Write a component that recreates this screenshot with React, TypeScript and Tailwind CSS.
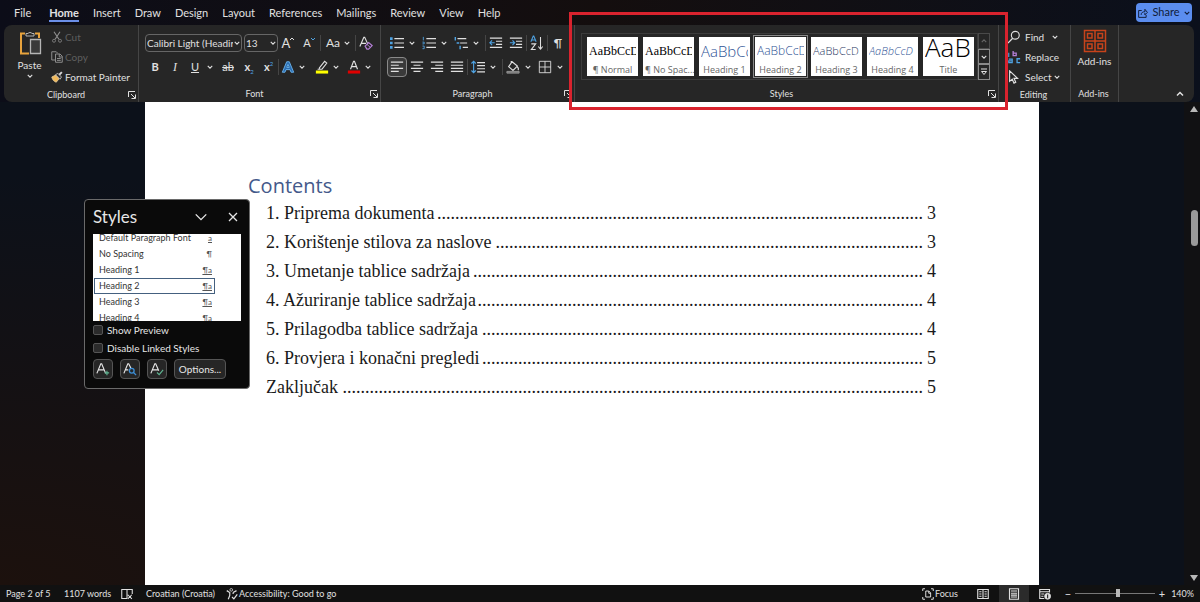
import { useState } from 'react';
import type { ReactNode } from 'react';
import { clsx } from 'clsx';

const TABS = ['File', 'Home', 'Insert', 'Draw', 'Design', 'Layout', 'References', 'Mailings', 'Review', 'View', 'Help'];

const GALLERY = [
    { name: '¶ Normal', sample: 'AaBbCcD', look: "items-center text-[12px] text-black font-['Liberation_Serif',serif]" },
    { name: '¶ No Spac...', sample: 'AaBbCcD', look: "items-center text-[12px] text-black font-['Liberation_Serif',serif]" },
    { name: 'Heading 1', sample: 'AaBbCc', look: 'items-center text-[15px] font-light text-[#2f5496]' },
    { name: 'Heading 2', sample: 'AaBbCcD', look: 'items-center text-[12px] font-light text-[#2f5496]' },
    { name: 'Heading 3', sample: 'AaBbCcD', look: 'items-center text-[11px] font-light text-[#1f3763]' },
    { name: 'Heading 4', sample: 'AaBbCcD', look: 'items-center text-[11px] font-light italic text-[#2f5496]' },
    { name: 'Title', sample: 'AaB', look: 'items-start text-[26px] leading-4 font-light text-black' },
];

const STYLE_LIST = [
    { name: 'Default Paragraph Font', mark: 'a' },
    { name: 'No Spacing', mark: '¶' },
    { name: 'Heading 1', mark: '¶a' },
    { name: 'Heading 2', mark: '¶a' },
    { name: 'Heading 3', mark: '¶a' },
    { name: 'Heading 4', mark: '¶a' },
];

const TOC = [
    { title: '1. Priprema dokumenta', dots: 108, page: 3 },
    { title: '2. Korištenje stilova za naslove', dots: 95, page: 3 },
    { title: '3. Umetanje tablice sadržaja', dots: 100, page: 4 },
    { title: '4. Ažuriranje tablice sadržaja', dots: 99, page: 4 },
    { title: '5. Prilagodba tablice sadržaja', dots: 98, page: 4 },
    { title: '6. Provjera i konačni pregledi', dots: 98, page: 5 },
    { title: 'Zaključak', dots: 129, page: 5 },
];

function Chevron({ className = 'w-1.5 h-1.5', thin }: { className?: string; thin?: boolean }) {
    return (
        <svg viewBox="0 0 8 8" className={className} fill="none" stroke="currentColor" strokeWidth={thin ? 0.8 : 1.5}>
            <path d="M1 2.500 4 5.500 7 2.500" />
        </svg>
    );
}

function Icon({ children, className = 'w-4 h-4' }: { children: ReactNode; className?: string }) {
    return (
        <svg viewBox="0 0 16 16" className={clsx('shrink-0', className)} fill="none" stroke="currentColor">
            {children}
        </svg>
    );
}

function Tool({ label, children, className = 'w-5', active }: { label: string; children: ReactNode; className?: string; active?: boolean }) {
    return (
        <button
            type="button"
            aria-label={label}
            className={clsx(
                'h-5 shrink-0 flex items-center justify-center rounded-sm',
                className,
                active && 'border border-[#8a8a8a] bg-[#3a3a3a]'
            )}
        >
            {children}
        </button>
    );
}

function More({ label, className = 'mr-0.5' }: { label: string; className?: string }) {
    return (
        <button type="button" aria-label={label} className={clsx('w-2.5 h-5 shrink-0 flex items-center justify-center', className)}>
            <Chevron />
        </button>
    );
}

function Sep() {
    return <span className="w-px h-4 shrink-0 bg-[#454545]" />;
}

function Launcher({ label }: { label: string }) {
    return (
        <button type="button" aria-label={label} className="w-2 h-2 shrink-0">
            <svg viewBox="0 0 8 8" className="w-2 h-2" fill="none" stroke="currentColor">
                <path d="M.5 6V.5H7M3 3l4 4M7.500 3.500v4h-4" />
            </svg>
        </button>
    );
}

function Group({ name, className, launcher = true, children }: { name: string; className: string; launcher?: boolean; children: ReactNode }) {
    return (
        <section aria-label={name} className={clsx('relative shrink-0 flex flex-col border-r border-[#454545]', className)}>
            <div className="h-[62px] pt-2">{children}</div>
            <div className="flex items-center pr-0.5">
                <span className="flex-1 text-center text-[9px] leading-4">{name}</span>
                {launcher && <Launcher label={`${name} settings`} />}
            </div>
        </section>
    );
}

function Clipboard() {
    return (
        <Group name="Clipboard" className="w-[135px]">
            <div className="flex -mt-1">
                <button type="button" className="w-[47px] pl-1 flex flex-col items-center text-[10px] leading-4">
                    <svg viewBox="0 0 24 28" className="w-6 h-7" fill="none">
                        <path d="M7 4.500H3v20h8M17 4.500h4V9" stroke="#e8a33d" strokeWidth="2" />
                        <path d="M8 7V4.500h2a2.500 2.500 0 0 1 4 0h2V7z" fill="#262626" stroke="#b5b5b5" />
                        <path d="M12.500 10.500h10v14h-10z" fill="#3a3a3a" stroke="#b5b5b5" strokeWidth="1.300" />
                    </svg>
                    Paste
                    <Chevron />
                </button>
                <div className="flex flex-col text-[10px] leading-5 -mt-0.5">
                    <button type="button" className="h-5 flex items-center gap-0.5 text-[#5f5f5f]">
                        <Icon className="w-3 h-3 text-[#8f8f8f]">
                            <path d="M4 1l6.500 10M12 1 5.500 11" strokeWidth="1.500" />
                            <circle cx="4" cy="13" r="2" />
                            <circle cx="12" cy="13" r="2" />
                        </Icon>
                        Cut
                    </button>
                    <button type="button" className="h-5 flex items-center gap-0.5 text-[#5f5f5f]">
                        <Icon className="w-3 h-3 text-[#8f8f8f]">
                            <path d="M6 12H1V1h6l2 2" strokeWidth="1.300" />
                            <path d="M6 4h6l3 3v8H6zM11 4v4h4M8 10h5M8 12.500h5" strokeWidth="1.300" />
                        </Icon>
                        Copy
                    </button>
                    <button type="button" className="h-5 flex items-center gap-0.5 whitespace-nowrap">
                        <Icon className="w-3 h-3">
                            <path d="M1 8l6-3 4 5-4 5C4 14 2 12 1 8z" fill="#f0b95b" stroke="#e8d0a0" />
                            <path d="M6 5l6 6 2-3-5-5z" fill="#333" stroke="#d6d6d6" />
                            <path d="M11 5l3.500-3.500" stroke="#d6d6d6" strokeWidth="2.500" />
                        </Icon>
                        Format Painter
                    </button>
                </div>
            </div>
        </Group>
    );
}

function Combo({ label, value, options, className }: { label: string; value: string; options: string[]; className: string }) {
    return (
        <div className={clsx('relative shrink-0', className)}>
            <select
                aria-label={label}
                defaultValue={value}
                className="block w-full h-[18px] pl-px pr-2 appearance-none rounded-sm border border-[#666] bg-[#262626] text-[10px] leading-4 outline-none"
            >
                {options.map((o) => (
                    <option key={o}>{o}</option>
                ))}
            </select>
            <span className="absolute right-0.5 inset-y-0 flex items-center pointer-events-none">
                <Chevron />
            </span>
        </div>
    );
}

function FontGroup() {
    return (
        <Group name="Font" className="w-[242px]">
            <div className="pl-1.5 flex flex-col gap-1">
                <div className="h-5 flex items-center">
                    <Combo label="Font" value="Calibri Light (Headir" options={['Calibri Light (Headir', 'Calibri']} className="w-[97px] mr-0.5" />
                    <Combo label="Font size" value="13" options={['11', '12', '13']} className="w-[34px]" />
                    <Tool label="Grow font">
                        <span className="text-[13px] leading-4">A</span>
                        <svg viewBox="0 0 4 4" className="w-1 h-1 mb-2" fill="none" stroke="currentColor"><path d="M0 3 2 1l2 2" /></svg>
                    </Tool>
                    <Tool label="Shrink font" className="w-[22px]">
                        <span className="text-[11px] leading-4">A</span>
                        <svg viewBox="0 0 4 4" className="w-1 h-1 mb-2" fill="none" stroke="#4fa3e3"><path d="M0 1l2 2 2-2" /></svg>
                    </Tool>
                    <Sep />
                    <Tool label="Change case" className="w-[34px] gap-1">
                        <span className="text-[12px] leading-4">Aa</span>
                        <Chevron />
                    </Tool>
                    <Sep />
                    <Tool label="Clear formatting">
                        <Icon className="w-3.5 h-3.5">
                            <path d="M1 12 5.500 1.500h1L10 9M3 8.500h5" strokeWidth="1.300" />
                            <path d="M7 11.500l4-4 4 3.500-4 4H9z" stroke="#b47fd6" strokeWidth="1.400" />
                            <path d="M9 9.500l4 3.500" stroke="#b47fd6" />
                        </Icon>
                    </Tool>
                </div>
                <div className="h-5 flex items-center text-[11px]">
                    <Tool label="Bold"><b>B</b></Tool>
                    <Tool label="Italic"><i className="font-['Liberation_Serif',serif] text-[12px]">I</i></Tool>
                    <Tool label="Underline"><u>U</u></Tool>
                    <More label="Underline styles" />
                    <Tool label="Strikethrough" className="w-[22px]"><s>ab</s></Tool>
                    <Tool label="Subscript"><b>x</b><span className="text-[6px] text-[#4fa3e3] mt-2">2</span></Tool>
                    <Tool label="Superscript" className="w-[19px]"><b>x</b><span className="text-[6px] text-[#4fa3e3] mb-2">2</span></Tool>
                    <Sep />
                    <Tool label="Text effects" className="w-[18px]">
                        <Icon className="w-3.5 h-3.5">
                            <path d="M1.500 14 6.500 2h3l5 12h-3l-1.200-3H5.700l-1.200 3zM6.600 8.500h2.800L8 5z" fill="#2b6cb0" stroke="#6db8f2" />
                        </Icon>
                    </Tool>
                    <More label="More text effects" className="mr-1.5" />
                    <Tool label="Highlight color" className="w-[18px]">
                        <Icon className="w-3.5 h-3.5">
                            <path d="M5 9l6-7.500 2.500 2L8 10.500H5zM3 10.500h3" strokeWidth="1.200" />
                            <path d="M1 12h14v3.500H1z" fill="#ffff00" stroke="none" />
                        </Icon>
                    </Tool>
                    <More label="More highlight colors" className="mr-1" />
                    <Tool label="Font color" className="w-[18px]">
                        <Icon className="w-3.5 h-3.5">
                            <path d="M4 10.500 7.500 1.500h1l3.500 9M5.500 7.500h5" strokeWidth="1.300" />
                            <path d="M1 12h14v3.500H1z" fill="#e00000" stroke="none" />
                        </Icon>
                    </Tool>
                    <More label="More font colors" />
                </div>
            </div>
        </Group>
    );
}

function ParagraphGroup() {
    return (
        <Group name="Paragraph" className="w-[194px]">
            <div className="pl-1.5 flex flex-col gap-1">
                <div className="h-5 flex items-center">
                    <Tool label="Bullets">
                        <Icon className="w-3.5 h-3.5">
                            <path d="M5 3h11M5 8h11M5 13h11" strokeWidth="1.300" />
                            <path d="M0 3h3M0 8h3M0 13h3" stroke="#4fa3e3" strokeWidth="3" />
                        </Icon>
                    </Tool>
                    <More label="Bullet library" />
                    <Tool label="Numbering">
                        <Icon className="w-3.5 h-3.5">
                            <path d="M5 3h11M5 8h11M5 13h11" strokeWidth="1.300" />
                            <path d="M1.500 1v4M.5 7h2v2h-2M.5 11.500h2v3h-2" stroke="#4fa3e3" />
                        </Icon>
                    </Tool>
                    <More label="Numbering library" />
                    <Tool label="Multilevel list">
                        <Icon className="w-3.5 h-3.5">
                            <path d="M4 3h10M7 8h8M10 13h6" strokeWidth="1.300" />
                            <path d="M1.500 1v4M3 8h3M7 11v4" stroke="#4fa3e3" strokeWidth="1.600" />
                        </Icon>
                    </Tool>
                    <More label="List library" className="mr-1" />
                    <Sep />
                    <Tool label="Decrease indent">
                        <Icon className="w-3.5 h-3.5">
                            <path d="M1 2.500h14M8 6h7M8 9.500h7M1 13h14" strokeWidth="1.300" />
                            <path d="M6.500 7.700H1M3.500 5 1 7.700l2.500 2.800" stroke="#4fa3e3" strokeWidth="1.300" />
                        </Icon>
                    </Tool>
                    <Tool label="Increase indent">
                        <Icon className="w-3.5 h-3.5">
                            <path d="M1 2.500h14M8 6h7M8 9.500h7M1 13h14" strokeWidth="1.300" />
                            <path d="M1 7.700h5.500M4 5l2.500 2.700L4 10.500" stroke="#4fa3e3" strokeWidth="1.300" />
                        </Icon>
                    </Tool>
                    <Sep />
                    <Tool label="Sort">
                        <Icon className="w-3.5 h-4">
                            <path d="M1 6.500 3.700 0h.6L7 6.500M2 4.500h4" stroke="#4fa3e3" strokeWidth="1.200" />
                            <path d="M1.500 9h5l-5 6.500h5M12 1v14M9.500 12l2.500 3 2.500-3" strokeWidth="1.200" />
                        </Icon>
                    </Tool>
                    <Sep />
                    <Tool label="Show formatting marks">
                        <span className="text-[12px] leading-4">¶</span>
                    </Tool>
                </div>
                <div className="h-5 flex items-center">
                    <Tool label="Align left" active>
                        <Icon className="w-3.5 h-3.5"><path d="M1 2.500h14M1 6h9M1 9.500h14M1 13h9" strokeWidth="1.300" /></Icon>
                    </Tool>
                    <Tool label="Center">
                        <Icon className="w-3.5 h-3.5"><path d="M1 2.500h14M4 6h8M1 9.500h14M4 13h8" strokeWidth="1.300" /></Icon>
                    </Tool>
                    <Tool label="Align right">
                        <Icon className="w-3.5 h-3.5"><path d="M1 2.500h14M6 6h9M1 9.500h14M6 13h9" strokeWidth="1.300" /></Icon>
                    </Tool>
                    <Tool label="Justify">
                        <Icon className="w-3.5 h-3.5"><path d="M1 2.500h14M1 6h14M1 9.500h14M1 13h14" strokeWidth="1.300" /></Icon>
                    </Tool>
                    <Sep />
                    <Tool label="Line spacing">
                        <Icon className="w-3.5 h-3.5">
                            <path d="M7 3h9M7 6.500h9M7 10h9M7 13.500h9" strokeWidth="1.300" />
                            <path d="M3 1.500v13M.5 4 3 1.500 5.500 4M.5 12 3 14.500 5.500 12" stroke="#4fa3e3" strokeWidth="1.300" />
                        </Icon>
                    </Tool>
                    <More label="Line spacing options" className="mr-1" />
                    <Sep />
                    <Tool label="Shading">
                        <Icon className="w-3.5 h-3.5">
                            <path d="M7 2l6 5-5 5-5-4.500zM6 4V1M13 8c1.500 1.500 1.500 3 .5 3.500" strokeWidth="1.300" />
                            <path d="M1 13h14v2H1z" fill="#777" stroke="#999" />
                        </Icon>
                    </Tool>
                    <More label="Shading colors" />
                    <Tool label="Borders">
                        <Icon className="w-3.5 h-3.5"><path d="M1.500 1.500h13v13h-13zM8 1.500v13M1.500 8h13" /></Icon>
                    </Tool>
                    <More label="Border options" />
                </div>
            </div>
        </Group>
    );
}

function StylesGroup() {
    const [selected, setSelected] = useState('Heading 2');

    return (
        <Group name="Styles" className="w-[424px]">
            <div className="ml-1.5 w-[409px] flex">
                <div className="flex-1 h-[47px] flex items-center gap-[5px] pl-[5px] border border-[#3c3c3c] font-['Open_Sans',sans-serif]">
                    {GALLERY.map((s) => (
                        <button
                            key={s.name}
                            type="button"
                            onClick={() => setSelected(s.name)}
                            className={clsx(
                                'w-[51px] h-[39px] shrink-0 px-0.5 overflow-hidden bg-white flex flex-col justify-end',
                                selected === s.name && 'outline outline-offset-1 outline-[#8a8a8a]'
                            )}
                        >
                            <span className={clsx('w-full h-6 flex whitespace-nowrap overflow-hidden', s.look)}>{s.sample}</span>
                            <span className="w-full text-center text-[9px] leading-[13px] text-[#666] whitespace-nowrap">{s.name}</span>
                        </button>
                    ))}
                </div>
                <div className="w-3 flex flex-col">
                    <button type="button" aria-label="Scroll styles up" className="flex-1 flex items-center justify-center border border-[#4a4a4a] text-[#666]">
                        <Chevron className="w-1.5 h-1.5 rotate-180" />
                    </button>
                    <button type="button" aria-label="Scroll styles down" className="flex-1 flex items-center justify-center border border-[#8a8a8a]">
                        <Chevron />
                    </button>
                    <button type="button" aria-label="All styles" className="flex-1 flex items-center justify-center border border-[#8a8a8a]">
                        <svg viewBox="0 0 8 8" className="w-2 h-2" fill="none" stroke="currentColor"><path d="M1 1h6M1.500 3.500h5L4 6.500z" /></svg>
                    </button>
                </div>
            </div>
            <div className="absolute -left-1.5 -right-2.5 -top-[13px] -bottom-2 border-3 border-[#d9232e] pointer-events-none z-10" />
        </Group>
    );
}

function EditingGroup() {
    return (
        <Group name="Editing" className="w-[72px]" launcher={false}>
            <div className="-mt-1.5 pl-2 flex flex-col text-[10px] whitespace-nowrap">
                <button type="button" className="h-5 flex items-center gap-1">
                    <Icon className="w-3.5 h-3.5">
                        <circle cx="9.500" cy="6" r="4.500" strokeWidth="1.300" />
                        <path d="M6.500 9.500 1 15" strokeWidth="1.500" />
                    </Icon>
                    Find
                    <Chevron className="w-1.5 h-1.5 ml-1" />
                </button>
                <button type="button" className="h-5 flex items-center gap-1">
                    <Icon className="w-3.5 h-3.5">
                        <path d="M7 1v5.500h3.500V3.500H7" stroke="#b47fd6" strokeWidth="1.500" />
                        <path d="M15 10h-3.500v4.500H15" stroke="#4fa3e3" strokeWidth="1.500" />
                        <path d="M2 3v5M2 10.500h4v4H2v-2h4" stroke="#4fa3e3" strokeWidth="1.300" />
                    </Icon>
                    Replace
                </button>
                <button type="button" className="h-5 flex items-center gap-1">
                    <Icon className="w-3.5 h-3.5">
                        <path d="M3 1v12l3-2.500 2 4.500 2-1-2-4.500h4z" strokeWidth="1.300" />
                    </Icon>
                    Select
                    <Chevron className="w-1.5 h-1.5 -ml-0.5" />
                </button>
            </div>
        </Group>
    );
}

function Ribbon() {
    return (
        <div className="mx-1 mr-1.5 h-[77px] shrink-0 flex rounded-lg bg-[#262626]">
            <Clipboard />
            <FontGroup />
            <ParagraphGroup />
            <StylesGroup />
            <EditingGroup />
            <Group name="Add-ins" className="w-12" launcher={false}>
                <button type="button" className="w-full -mt-1 flex flex-col items-center text-[10px] leading-4">
                    <svg viewBox="0 0 24 24" className="w-6 h-6" fill="none" stroke="#c8431b" strokeWidth="1.500">
                        <path d="M1.500 1.500h21v21h-21zM12 1.500v21M1.500 12h21" />
                        <path d="M4.500 4.500h4.500v4.500H4.500zM15 4.500h4.500v4.500H15zM4.500 15h4.500v4.500H4.500zM15 15h4.500v4.500H15z" />
                    </svg>
                    Add-ins
                </button>
            </Group>
            <div className="flex-1 flex items-end justify-end p-1 pr-2.5">
                <button type="button" aria-label="Collapse ribbon">
                    <Chevron className="w-2 h-2 rotate-180" />
                </button>
            </div>
        </div>
    );
}

function StylesPane() {
    const [current, setCurrent] = useState('Heading 2');

    return (
        <aside aria-label="Styles" className="absolute left-[84px] top-[97px] w-[166px] h-[190px] px-2 pt-1 rounded-sm border border-[#6a6a6a] bg-[#0a0a0a] text-[10px] text-[#e6e6e6]">
            <div className="h-[30px] pb-1 flex items-center">
                <h2 className="flex-1 text-[17px] leading-6">Styles</h2>
                <button type="button" aria-label="Pane options" className="w-5 flex justify-center">
                    <Chevron className="w-3.5 h-3.5" thin />
                </button>
                <button type="button" aria-label="Close" className="ml-3 -mr-0.5 w-5 flex justify-center">
                    <svg viewBox="0 0 10 10" className="w-2.5 h-2.5" stroke="currentColor" strokeWidth="1.300"><path d="M1 1l8 8M9 1 1 9" /></svg>
                </button>
            </div>
            <ul className="h-[87px] overflow-hidden bg-white text-[9px] text-[#333]">
                {STYLE_LIST.map((s) => (
                    <li key={s.name} className="first:-mt-1">
                        <button
                            type="button"
                            onClick={() => setCurrent(s.name)}
                            className={clsx(
                                'w-[121px] h-4 ml-px pl-1 pr-0.5 flex items-center justify-between border',
                                current === s.name ? 'border-[#44607f]' : 'border-transparent'
                            )}
                        >
                            {s.name}
                            <span className={clsx('text-[8px] text-[#555]', s.mark !== '¶' && 'underline')}>{s.mark}</span>
                        </button>
                    </li>
                ))}
            </ul>
            <label className="h-[18px] flex items-center gap-1">
                <input type="checkbox" className="appearance-none w-2.5 h-2.5 rounded-xs border border-[#555] bg-[#2b2b2b]" />
                Show Preview
            </label>
            <label className="h-[18px] flex items-center gap-1">
                <input type="checkbox" className="appearance-none w-2.5 h-2.5 rounded-xs border border-[#555] bg-[#2b2b2b]" />
                Disable Linked Styles
            </label>
            <div className="mt-0.5 flex gap-[7px]">
                <button type="button" aria-label="New style" className="w-5 h-5 flex items-center justify-center rounded-sm border border-[#555] bg-[#262626]">
                    <Icon className="w-3.5 h-3.5">
                        <path d="M1 13 5.500 2h1L11 13M3 9h6" strokeWidth="1.300" />
                        <path d="M12.500 10v5M10 12.500h5" stroke="#5fb592" strokeWidth="1.300" />
                    </Icon>
                </button>
                <button type="button" aria-label="Style inspector" className="w-5 h-5 flex items-center justify-center rounded-sm border border-[#555] bg-[#262626]">
                    <Icon className="w-3.5 h-3.5">
                        <path d="M1 13 5.500 2h1L9 7M3 9h3" strokeWidth="1.300" />
                        <circle cx="10" cy="10" r="2.700" stroke="#3d8fd6" strokeWidth="1.500" />
                        <path d="M12 12l3 3" stroke="#3d8fd6" strokeWidth="1.500" />
                    </Icon>
                </button>
                <button type="button" aria-label="Manage styles" className="w-5 h-5 flex items-center justify-center rounded-sm border border-[#555] bg-[#262626]">
                    <Icon className="w-3.5 h-3.5">
                        <path d="M1 13 5.500 2h1L10 10M3 9h6" strokeWidth="1.300" />
                        <path d="M8 12l2.500 2.500L15 9" stroke="#5fb592" strokeWidth="1.300" />
                    </Icon>
                </button>
                <button type="button" className="w-[52px] h-5 rounded-sm border border-[#555] bg-[#262626]">Options...</button>
            </div>
        </aside>
    );
}

function Document() {
    return (
        <main className="flex-1 relative flex bg-[radial-gradient(at_bottom_left,#1c110d,#0c111a_60%)]">
            <div className="flex-1 flex justify-center">
                <article className="w-full max-w-[894px] bg-white px-[103px] pt-[70px]">
                    <h1 className="font-['Open_Sans',sans-serif] text-[20px] leading-7 text-[#44598a]">Contents</h1>
                    <nav aria-label="Contents" className="-mt-px pl-[18px] font-['Liberation_Serif',serif] text-[18px] leading-[29px] text-[#1a1a1a]">
                        {TOC.map((row) => (
                            <a key={row.title} href="#toc" className="flex whitespace-nowrap">
                                <span>{row.title}</span>
                                <span aria-hidden="true" className="flex-1 mr-1 flex justify-end overflow-hidden">{'.'.repeat(row.dots)}</span>
                                <span>{row.page}</span>
                            </a>
                        ))}
                    </nav>
                </article>
            </div>
            <div className="w-4 flex flex-col items-center pt-1 pb-1 pl-1 bg-[#15130f]/60 text-[#b8b8b8]">
                <svg viewBox="0 0 8 6" className="w-2 h-1.5" fill="currentColor"><path d="M4 0l4 6H0z" /></svg>
                <div className="mt-[98px] w-[7px] h-9 rounded-full bg-[#9a9a9a]" />
                <svg viewBox="0 0 8 6" className="w-2 h-1.5 mt-auto" fill="currentColor"><path d="M0 0h8L4 6z" /></svg>
            </div>
            <StylesPane />
        </main>
    );
}

function StatusBar() {
    return (
        <footer className="h-[17px] shrink-0 flex items-center pl-1.5 pr-1.5 bg-[#111] text-[9px] leading-4 whitespace-nowrap">
            <span className="w-[58px]">Page 2 of 5</span>
            <span className="w-[57px]">1107 words</span>
            <button type="button" aria-label="Proofing" className="w-[25px]">
                <Icon className="w-3 h-3">
                    <path d="M8 2v12M8 2H1v12h7M8 2h7v6M9 9l5.500 5.500M14.500 9 9 14.500" strokeWidth="1.400" />
                </Icon>
            </button>
            <span className="w-20">Croatian (Croatia)</span>
            <button type="button" className="flex items-center gap-px">
                <Icon className="w-3 h-3">
                    <circle cx="7" cy="2.500" r="1.800" />
                    <path d="M1 3.500l4 2.500v4l-2 5M14 3.500 9.500 6M9.500 6v2M8 12l2.500 2.500L15 8.500" strokeWidth="1.600" />
                </Icon>
                Accessibility: Good to go
            </button>
            <button type="button" className="ml-auto mr-[19px] flex items-center gap-px">
                <Icon className="w-3 h-3">
                    <path d="M1 4V1h3M12 1h3v3M15 12v3h-3M4 15H1v-3M5 4h4l2.500 2.500V12H5zM9 4v3h2.500" strokeWidth="1.300" />
                </Icon>
                Focus
            </button>
            <button type="button" aria-label="Read mode" className="mr-2.5">
                <Icon className="w-3 h-3">
                    <path d="M1 2h14v12H1zM8 2v12M3 5h3M3 8h3M3 11h3M10 5h3M10 8h3M10 11h3" strokeWidth="1.500" />
                </Icon>
            </button>
            <button type="button" aria-label="Print layout" className="w-[30px] h-[17px] mr-2.5 flex items-center justify-center bg-[#2b2b2b]">
                <Icon className="w-3 h-3">
                    <path d="M2 1h12v14H2zM4 4h8M4 7h8M4 9.500h8M4 12h8" strokeWidth="1.500" />
                </Icon>
            </button>
            <button type="button" aria-label="Web layout" className="mr-3">
                <Icon className="w-3 h-3">
                    <path d="M7 14H1V2h13v4M1 5h13M3 8h4M3 11h3" strokeWidth="1.500" />
                    <circle cx="11.500" cy="11" r="4" fill="#ddd" />
                    <path d="M11.500 8.500v5" stroke="#222" strokeWidth="1.500" />
                </Icon>
            </button>
            <button type="button" aria-label="Zoom out" className="w-2.5 text-[11px]">−</button>
            <input
                type="range"
                aria-label="Zoom"
                min={0}
                max={100}
                defaultValue={54}
                className="w-20 h-3 mx-0.5 appearance-none bg-transparent [&::-webkit-slider-runnable-track]:h-px [&::-webkit-slider-runnable-track]:bg-[#777] [&::-webkit-slider-thumb]:appearance-none [&::-webkit-slider-thumb]:w-1 [&::-webkit-slider-thumb]:h-2 [&::-webkit-slider-thumb]:-mt-1 [&::-webkit-slider-thumb]:bg-[#b8b8b8]"
            />
            <button type="button" aria-label="Zoom in" className="w-2.5 text-[11px]">+</button>
            <span className="w-[27px] text-right">140%</span>
        </footer>
    );
}

export default function App() {
    return (
        <div className="min-h-screen flex flex-col bg-linear-to-r from-[#0c0d18] via-[#140e0e] to-[#0b101c] font-['Lato','Open_Sans',sans-serif] text-[#e0e0e0]">
            <header className="h-[25px] shrink-0 flex items-center pl-3.5 pr-2">
                <nav aria-label="Ribbon tabs" className="flex gap-3.5 text-[11px] leading-5">
                    {TABS.map((t) => (
                        <a
                            key={t}
                            href={`#${t.toLowerCase()}`}
                            className={clsx('h-[19px] border-b-2 first:mr-1', t === 'Home' ? 'font-bold border-[#6b8fe8]' : 'border-transparent')}
                        >
                            {t}
                        </a>
                    ))}
                </nav>
                <button type="button" className="ml-auto w-14 h-[19px] flex items-center justify-center gap-1 rounded-sm bg-[#5b8def] text-[11px] text-[#101c38]">
                    <Icon className="w-2.5 h-2.5">
                        <path d="M6 4H1v11h12v-4M5 11c0-4 3-5 6-5M11 6V2l4 5-4 4V8" strokeWidth="1.500" />
                    </Icon>
                    Share
                    <Chevron />
                </button>
            </header>
            <Ribbon />
            <Document />
            <StatusBar />
        </div>
    );
}
